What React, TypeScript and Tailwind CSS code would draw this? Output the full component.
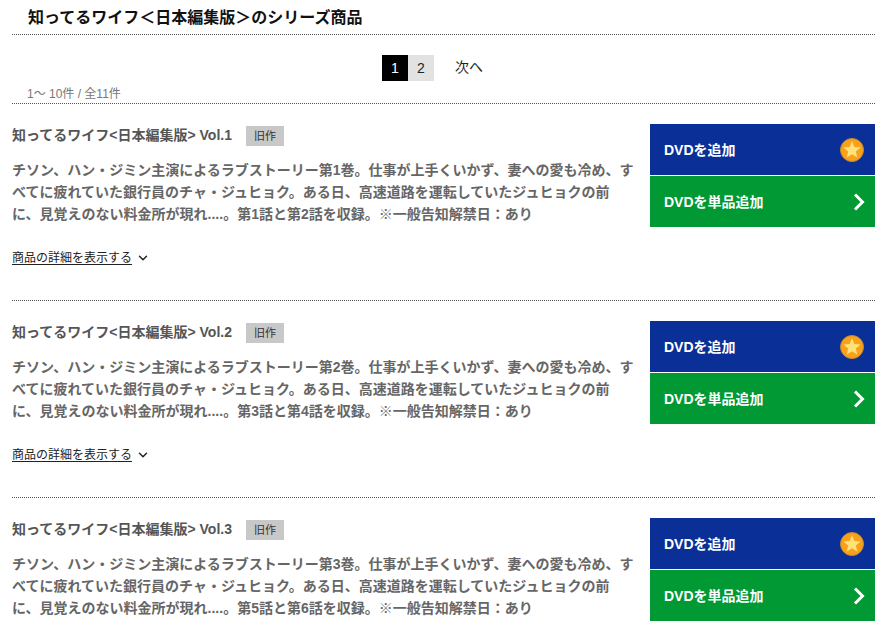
import { ChevronDown } from "lucide-react";

const font = "font-['Liberation_Sans','Noto_Sans_CJK_JP',sans-serif]";

const items = [
  { vol: 1, no: "第1巻", from: "第1話と第2話" },
  { vol: 2, no: "第2巻", from: "第3話と第4話" },
  { vol: 3, no: "第3巻", from: "第5話と第6話" },
];

function Item({ vol, no, from }: { vol: number; no: string; from: string }) {
  return (
    <div className="flex h-[197px] border-b border-dotted border-[#555] pt-5">
      <div className="w-[638px] shrink-0 pt-[2px]">
        {/* Title */}
        <div className="flex h-5 items-center">
          <h3 className="pb-[3px] text-[14px] leading-5 font-bold text-[#555]">
            知ってるワイフ&lt;日本編集版&gt; Vol.{vol}
          </h3>
          <span className="ml-[14px] flex h-5 w-[38px] items-center justify-center bg-[#c8c8c8] text-[11px] text-[#333]">
            旧作
          </span>
        </div>

        {/* Description */}
        <p className="mt-[13px] w-[623px] text-[14px] leading-[22px] font-bold text-[#666]">
          チソン、ハン・ジミン主演によるラブストーリー{no}。仕事が上手くいかず、妻への愛も冷め、すべてに疲れていた銀行員のチャ・ジュヒョク。ある日、高速道路を運転していたジュヒョクの前に、見覚えのない料金所が現れ....。{from}を収録。※一般告知解禁日：あり
        </p>

        <div className="mt-[24px] flex items-center text-[12px] leading-[18px] text-[#222]">
          <span className="underline underline-offset-2">商品の詳細を表示する</span>
          <ChevronDown size={14} strokeWidth={2.5} className="ml-1 text-[#222]" />
        </div>
      </div>

      {/* Buttons */}
      <div className="flex w-[225px] flex-col gap-px">
        <div className="flex h-[51px] items-center justify-between bg-[#0a2f96] pr-[11px] pl-[14px] text-[14px] font-bold text-white">
          <span className="pt-px">DVDを追加</span>
          <svg width="24" height="24" viewBox="0 0 24 24">
            <circle cx="12" cy="12" r="11.5" fill="#f9a11b" stroke="#b98a3a" strokeWidth="1" />
            <path
              d="M12 3.2l2.35 5.76 6.2.46-4.75 4.02 1.49 6.04L12 16.2l-5.29 3.28 1.49-6.04-4.75-4.02 6.2-.46z"
              fill="#ffe27a"
            />
          </svg>
        </div>
        <div className="flex h-[51px] items-center justify-between bg-[#009933] pr-[10px] pl-[14px] text-[14px] font-bold text-white">
          <span className="pt-px">DVDを単品追加</span>
          <svg width="12" height="18" viewBox="0 0 12 18" fill="none">
            <path d="M2 1.5l7.5 7.5L2 16.5" stroke="#fff" strokeWidth="3" />
          </svg>
        </div>
      </div>
    </div>
  );
}

export default function App() {
  return (
    <div className={`${font} h-[632px] w-[890px] overflow-hidden bg-white pr-[15px] pl-3`}>
      {/* Heading */}
      <div className="h-[35px] border-b border-dotted border-[#555] pl-4">
        <h2 className="text-[16px] leading-[35px] font-bold text-[#111]">
          知ってるワイフ＜日本編集版＞のシリーズ商品
        </h2>
      </div>

      {/* Pager */}
      <div className="relative h-[69px] border-b border-dotted border-[#555]">
        <div className="flex pt-[20px] pl-[370px] text-[14px] text-[#222]">
          <div className="flex h-[26px] items-center">
            <span className="flex h-[26px] w-[26px] items-center justify-center bg-black text-white">1</span>
            <span className="flex h-[26px] w-[26px] items-center justify-center bg-[#e2e2e2]">2</span>
            <span className="ml-[21px] pb-px">次へ</span>
          </div>
        </div>
        <p className="absolute top-[50px] left-[15px] text-[12px] leading-[18px] text-[#777]">1〜 10件 / 全11件</p>
      </div>

      {items.map((item) => (
        <Item key={item.vol} {...item} />
      ))}
    </div>
  );
}
